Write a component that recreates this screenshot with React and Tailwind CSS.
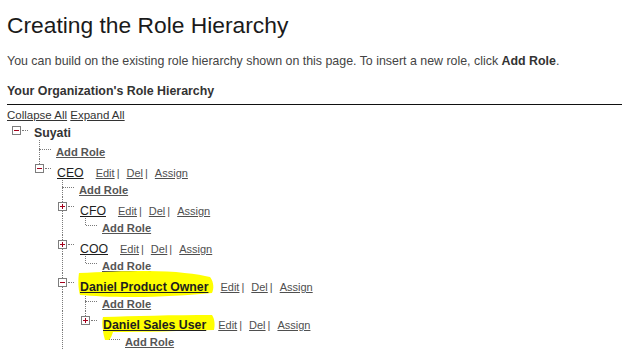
import React from 'react';

const dot = 'border-dotted border-[#7a7a7a]';

// row list of the tree, flat; `lines` says which ancestor columns still carry a connector
const rows = [
  { kind: 'node', depth: 0, label: 'Suyati', root: true, open: true, lines: [], top: false, bottom: false },
  { kind: 'add', depth: 1, lines: [false], cont: true },
  { kind: 'node', depth: 1, label: 'CEO', open: true, lines: [false], top: true, bottom: false },
  { kind: 'add', depth: 2, lines: [false, false], cont: true },
  { kind: 'node', depth: 2, label: 'CFO', open: false, lines: [false, false], top: true, bottom: true },
  { kind: 'add', depth: 3, lines: [false, false, true], cont: false },
  { kind: 'node', depth: 2, label: 'COO', open: false, lines: [false, false], top: true, bottom: true },
  { kind: 'add', depth: 3, lines: [false, false, true], cont: false },
  { kind: 'node', depth: 2, label: 'Daniel Product Owner', open: true, mark: 'dpo', lines: [false, false], top: true, bottom: true },
  { kind: 'add', depth: 3, lines: [false, false, true], cont: true },
  { kind: 'node', depth: 3, label: 'Daniel Sales User', open: false, mark: 'dsu', lines: [false, false, true], top: true, bottom: false },
  { kind: 'add', depth: 4, lines: [false, false, true, false], cont: false },
];

const marks = {
  dpo: { w: 140, h: 30, d: 'M -1 0 C 20 -1, 45 -2, 67 -2 C 95 -2, 118 1, 130 4 C 134 9, 134 16, 132 20 C 110 22, 80 24, 53 24 C 30 24, 12 23, 0 22 C -2 15, -2 6, -1 0 Z' },
  dsu: { w: 120, h: 34, d: 'M 0 6 C 30 5, 70 4, 109 4 C 112 8, 112 15, 111 19 C 80 20, 40 21, 10 21 C 9 24, 8 27, 6 29 L 2 29 C 1 25, 0 22, 0 19 C -1 14, -1 10, 0 6 Z' },
};

function Toggle({ open }) {
  return (
    <div className="relative w-[9px] h-[9px] border border-[#7d7d7d] bg-white">
      <div className="absolute left-[1px] top-[3px] w-[5px] h-px bg-[#a3001b]" />
      {!open && <div className="absolute left-[3px] top-[1px] w-px h-[5px] bg-[#a3001b]" />}
    </div>
  );
}

function Rail({ on }) {
  return <div className="w-[23px] shrink-0">{on && <div className={`ml-[9px] h-full border-l ${dot}`} />}</div>;
}

function Actions() {
  return (
    <span className="ml-3 text-[11px] text-[#4f4f4f]">
      <a href="#" className="underline">Edit</a>
      <span className="ml-[2px] mr-[7px]">|</span>
      <a href="#" className="underline">Del</a>
      <span className="ml-[2px] mr-[7px]">|</span>
      <a href="#" className="underline">Assign</a>
    </span>
  );
}

function Label({ row }) {
  if (row.root) return <span className="text-[12.3px] font-bold text-[#333]">{row.label}</span>;
  const m = row.mark && marks[row.mark];
  return (
    <span className="relative inline-block">
      {m && (
        <svg className="absolute left-0 top-[-3px] overflow-visible" width={m.w} height={m.h}>
          <path d={m.d} fill="#ffff00" />
        </svg>
      )}
      <a href="#" className={`relative text-[12.3px] text-[#1e1e1e] underline ${m ? 'font-bold' : ''}`}>{row.label}</a>
    </span>
  );
}

function Row({ row }) {
  const rails = row.lines.map((on, i) => <Rail key={i} on={on} />);

  if (row.kind === 'add') {
    return (
      <div className="flex h-[19px]">
        {rails.slice(0, row.depth)}
        <div className="flex shrink-0">
          <div className="ml-[9px] flex flex-col">
            <div className={`h-[9px] border-l ${dot}`} />
            <div className={`h-[10px] ${row.cont ? `border-l ${dot}` : 'w-px'}`} />
          </div>
          <div className={`mt-[9px] w-[11px] h-0 border-t ${dot}`} />
        </div>
        <a href="#" className="ml-[5px] mt-[3px] leading-[19px] text-[11.2px] font-bold text-[#555] underline whitespace-nowrap">
          Add Role
        </a>
      </div>
    );
  }

  return (
    <div className="flex h-[19px]">
      {rails.slice(0, row.depth)}
      <div className="flex shrink-0 items-start">
        <div className="ml-[5px] flex w-[9px] flex-col">
          <div className={`ml-[4px] h-[5px] ${row.top ? `border-l ${dot}` : ''}`} />
          <Toggle open={row.open} />
          <div className={`ml-[4px] h-[5px] ${row.bottom ? `border-l ${dot}` : ''}`} />
        </div>
        <div className={`ml-[1px] mt-[9px] w-[6px] h-0 border-t ${dot}`} />
      </div>
      <div className="ml-[6px] mt-[3px] flex items-baseline whitespace-nowrap leading-[19px]">
        <Label row={row} />
        {!row.root && <Actions />}
      </div>
    </div>
  );
}

const App = () => {
  return (
    <div className="min-h-screen bg-white pl-[7px] pr-[1px] font-['Liberation_Sans',Arial,sans-serif]">
      <h1 className="pt-[11px] text-[22.8px] leading-[28px] font-normal text-[#1a1a1a]">Creating the Role Hierarchy</h1>

      <p className="mt-[14px] text-[12.4px] leading-[16px] text-[#444]">
        You can build on the existing role hierarchy shown on this page. To insert a new role, click <b className="text-[#333]">Add Role</b>.
      </p>

      <h2 className="mt-[14px] border-b-[1.5px] border-[#111] pb-[5px] text-[12.4px] font-bold leading-[16px] text-[#333]">
        Your Organization's Role Hierarchy
      </h2>

      <div className="mt-[4px] text-[11.5px] leading-[12px] text-[#333]">
        <a href="#" className="underline">Collapse All</a> <a href="#" className="underline">Expand All</a>
      </div>

      <div>
        {rows.map((row, i) => (
          <Row key={i} row={row} />
        ))}
      </div>
    </div>
  );
};

export default App;
